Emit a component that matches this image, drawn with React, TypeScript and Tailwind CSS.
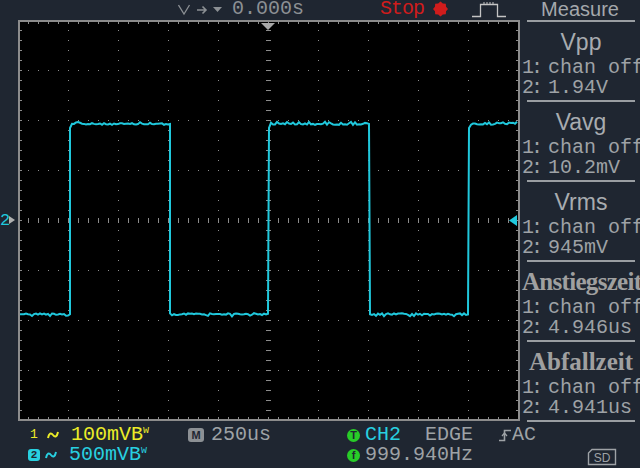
import React from "react";

const CYAN = "#20c8dc";

function buildWave(): string {
  let s = 12345;
  const r = () => {
    s = (s * 1103515245 + 12345) & 0x7fffffff;
    return s / 0x7fffffff;
  };
  const hi = 124;
  const lo = 314;
  const segs: [number, number, number][] = [
    [20, 70, lo],
    [70, 170, hi],
    [170, 269, lo],
    [269, 370, hi],
    [370, 469, lo],
    [469, 518, hi],
  ];
  let d = "";
  segs.forEach(([a, b, l], i) => {
    for (let x = a; x <= b; x += 2) {
      let y = l + (r() - 0.5) * 1.6;
      if (l === hi && r() < 0.2) y -= 1.5;
      if (l === lo && r() < 0.2) y += 1.5;
      if (i > 0 && l === hi && x === a) y = hi + 4;
      d += (d ? " L" : "M") + x + "," + y.toFixed(1);
    }
  });
  return d;
}

function Screen() {
  const G = "#8c8c8c";
  const vLines = [68, 118, 168, 218, 318, 368, 418, 468];
  const hLines = [70, 120, 170, 270, 320, 370];
  return (
    <svg width={502} height={402} viewBox="18 20 502 402" className="block shrink-0">
      <rect x={19} y={21} width={500} height={399} fill="#000" stroke={G} strokeWidth={2} />
      {vLines.map((x) => (
        <line key={"v" + x} x1={x + 0.5} y1={20} x2={x + 0.5} y2={420} stroke={G} strokeWidth={1} strokeDasharray="1 9" />
      ))}
      {hLines.map((y) => (
        <line key={"h" + y} x1={18} y1={y + 0.5} x2={518} y2={y + 0.5} stroke={G} strokeWidth={1} strokeDasharray="1 9" />
      ))}
      {/* center axes */}
      <line x1={18} y1={220.5} x2={518} y2={220.5} stroke={G} strokeWidth={5} strokeDasharray="1 9" />
      <line x1={268.5} y1={20} x2={268.5} y2={420} stroke={G} strokeWidth={5} strokeDasharray="1 9" />
      {/* border ticks */}
      <line x1={18} y1={23} x2={518} y2={23} stroke={G} strokeWidth={2} strokeDasharray="1 9" />
      <line x1={18} y1={418} x2={518} y2={418} stroke={G} strokeWidth={2} strokeDasharray="1 9" />
      <line x1={21} y1={20} x2={21} y2={420} stroke={G} strokeWidth={2} strokeDasharray="1 9" />
      <line x1={517} y1={20} x2={517} y2={420} stroke={G} strokeWidth={2} strokeDasharray="1 9" />
      {/* trigger position marker */}
      <polygon points="261,23 275,23 268,30" fill="#a8a8a8" />
      {/* trigger level marker */}
      <polygon points="517,215 517,226 509,220.5" fill={CYAN} />
      {/* waveform */}
      <path d={buildWave()} fill="none" stroke={CYAN} strokeWidth={2} strokeLinejoin="miter" />
    </svg>
  );
}

function Row({ prefix, value, className = "" }: { prefix: string; value: string; className?: string }) {
  return (
    <div className={"flex h-[20px] leading-[20px] whitespace-nowrap " + className}>
      <span className="w-[26px] shrink-0 tracking-[-3px]">{prefix}</span>
      <span>{value}</span>
    </div>
  );
}

function Section({
  title,
  serif,
  tight,
  v1,
  v2,
}: {
  title: string;
  serif?: boolean;
  tight?: boolean;
  v1: string;
  v2: string;
}) {
  return (
    <div className="h-[80px] flex flex-col">
      <div className="h-[78px] pl-[2px]">
        <div
          className={
            "mt-[8px] h-[24px] leading-[24px] text-center whitespace-nowrap " +
            (serif
              ? "font-['Liberation_Serif','Times_New_Roman',serif] font-bold text-[25px] text-[#a0a0a0] "
              : "font-['Liberation_Sans',Arial,sans-serif] text-[23px] text-[#a8acb0] ") +
            (tight ? "tracking-[-0.7px]" : "")
          }
        >
          {title}
        </div>
        <Row prefix="1:" value={v1} className="mt-[4px]" />
        <Row prefix="2:" value={v2} />
      </div>
      <div className="h-[2px] ml-[7px] mr-[5px] bg-[#9a9ea2]" />
    </div>
  );
}

function GearDot() {
  const pts: string[] = [];
  for (let i = 0; i < 16; i++) {
    const a = (i / 16) * Math.PI * 2;
    const rr = i % 2 === 0 ? 7.5 : 6;
    pts.push((7.5 + rr * Math.cos(a)).toFixed(2) + "," + (8 + rr * Math.sin(a)).toFixed(2));
  }
  return (
    <svg width={15} height={16} viewBox="0 0 15 16" className="block shrink-0 mt-[1px]">
      <polygon points={pts.join(" ")} fill="#d01c1c" />
    </svg>
  );
}

function Tilde({ color }: { color: string }) {
  return (
    <svg width={12} height={20} viewBox="0 0 12 20" className="block shrink-0">
      <path d="M1,13 C2,8 4,7.5 6,10 C8,12.5 10,12 11,7" fill="none" stroke={color} strokeWidth={2} />
    </svg>
  );
}

export default function App() {
  return (
    <div className="w-[640px] h-[468px] overflow-hidden bg-[#1f2631] flex flex-col font-['Liberation_Mono','DejaVu_Sans_Mono',monospace] text-[20px] text-[#9ea2a6]">
      {/* top bar */}
      <div className="h-[20px] flex items-start shrink-0 leading-[17px]">
        <svg width={44} height={20} viewBox="0 0 44 20" className="block shrink-0 ml-[178px]">
          <path d="M0.5,5 L6,14 L11.5,5" fill="none" stroke="#8c9094" strokeWidth={1.3} />
          <path d="M19,10 H28 M24.5,6.5 L28,10 L24.5,13.5" fill="none" stroke="#8c9094" strokeWidth={1.6} />
          <polygon points="35,7 44,7 39.5,12" fill="#8c9094" />
        </svg>
        <span className="ml-[10px] text-[#8c9094]">0.000s</span>
        <span className="ml-[76px] tracking-[-1px] text-[#d01c1c]">Stop</span>
        <div className="ml-[9px]">
          <GearDot />
        </div>
        <svg width={34} height={20} viewBox="0 0 34 20" className="block shrink-0 ml-[24px]">
          <path d="M0,16.5 H8.5 V4.5 H25.5 V16.5 H34" fill="none" stroke="#c4c4c4" strokeWidth={1.3} />
          <path d="M12,4 V2 M15,4 V2 M18,4 V2 M21,4 V2" stroke="#c4c4c4" strokeWidth={1} />
        </svg>
        <div className="ml-[14px] w-[120px] text-center font-['Liberation_Sans',Arial,sans-serif] text-[20px] leading-[18px] text-[#a4a8ac]">
          Measure
        </div>
      </div>

      {/* middle */}
      <div className="h-[402px] flex shrink-0">
        <div className="w-[18px] shrink-0 flex items-center">
          <div className="flex items-center -mt-[2px]">
            <span className="text-[17px] leading-[17px] text-[#20c8dc]">2</span>
            <svg width={6} height={8} viewBox="0 0 6 8" className="block shrink-0 -ml-[1px]">
              <polygon points="0,0 6,4 0,8" fill="#b0b0b0" />
            </svg>
          </div>
        </div>
        <Screen />
        <div className="w-[120px] shrink-0 flex flex-col">
          <div className="h-[2px] ml-[7px] mr-[5px] bg-[#9a9ea2]" />
          <Section title="Vpp" v1="chan off" v2="1.94V" />
          <Section title="Vavg" v1="chan off" v2="10.2mV" />
          <Section title="Vrms" v1="chan off" v2="945mV" />
          <Section title="Anstiegszeit" serif tight v1="chan off" v2="4.946us" />
          <Section title="Abfallzeit" serif v1="chan off" v2="4.941us" />
        </div>
      </div>

      {/* bottom bar */}
      <div className="flex-1 flex pt-[3px] pl-[28px]">
        <div className="w-[160px] shrink-0 flex flex-col">
          <div className="flex h-[20px] items-center leading-[20px] text-[#ecec28]">
            <span className="w-[12px] text-center text-[13px]">1</span>
            <div className="ml-[7px]">
              <Tilde color="#ecec28" />
            </div>
            <span className="ml-[12px]">100mV</span>
            <span>B</span>
            <span className="text-[10px] leading-[10px] self-start mt-[1px]">w</span>
          </div>
          <div className="flex h-[20px] items-center leading-[20px] text-[#28d0e0]">
            <span className="w-[12px] h-[12px] rounded-[3px] bg-[#28d0e0] text-[#1f2631] text-[11px] leading-[12px] font-bold text-center">
              2
            </span>
            <div className="ml-[5px]">
              <Tilde color="#28d0e0" />
            </div>
            <span className="ml-[12px]">500mV</span>
            <span>B</span>
            <span className="text-[10px] leading-[10px] self-start mt-[1px]">w</span>
          </div>
        </div>
        <div className="w-[159px] shrink-0 flex flex-col">
          <div className="flex h-[20px] items-center leading-[20px]">
            <span className="w-[16px] h-[14px] rounded-[3px] bg-[#8c9094] text-[#1f2631] text-[11px] leading-[14px] font-bold text-center font-['Liberation_Sans',Arial,sans-serif]">
              M
            </span>
            <span className="ml-[7px]">250us</span>
          </div>
        </div>
        <div className="flex flex-col">
          <div className="flex h-[20px] items-center leading-[20px]">
            <span className="w-[13px] h-[13px] rounded-full bg-[#28cc28] text-[#1f2631] text-[11px] leading-[13px] font-bold text-center font-['Liberation_Sans',Arial,sans-serif]">
              T
            </span>
            <span className="ml-[5px] text-[#28d0e0]">CH2</span>
            <span className="ml-[24px]">EDGE</span>
            <svg width={14} height={20} viewBox="0 0 14 20" className="block shrink-0 ml-[25px]">
              <path d="M1,15.5 H6.5 V5.5 H13" fill="none" stroke="#9ea2a6" strokeWidth={1.6} />
              <path d="M4,11 L6.5,8 L9,11" fill="none" stroke="#9ea2a6" strokeWidth={1.3} />
            </svg>
            <span>AC</span>
          </div>
          <div className="flex h-[20px] items-center leading-[20px]">
            <span className="w-[13px] h-[13px] rounded-full bg-[#28cc28] text-[#1f2631] text-[11px] leading-[13px] font-bold text-center font-['Liberation_Sans',Arial,sans-serif]">
              f
            </span>
            <span className="ml-[5px]">999.940Hz</span>
            <svg width={30} height={20} viewBox="0 0 30 20" className="block shrink-0 ml-[114px] mt-[4px]">
              <path d="M5,2.5 H28.5 V17.5 H1.5 V6 Z" fill="none" stroke="#9ea2a6" strokeWidth={1.4} />
              <text x={15} y={14.5} textAnchor="middle" fontSize={12} fill="#9ea2a6" fontFamily="Liberation Sans, Arial, sans-serif">
                SD
              </text>
            </svg>
          </div>
        </div>
      </div>
    </div>
  );
}
